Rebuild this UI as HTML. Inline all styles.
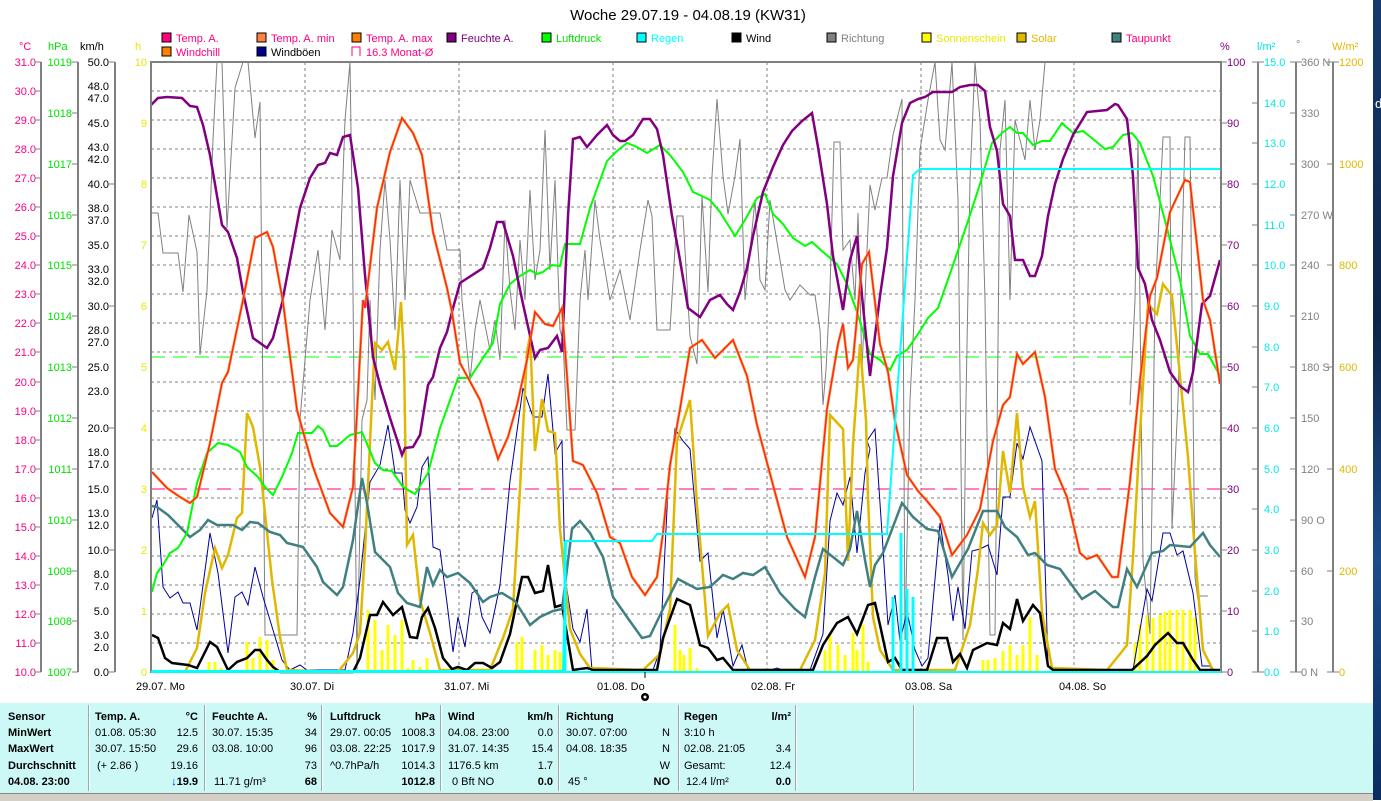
<!DOCTYPE html>
<html><head><meta charset="utf-8">
<style>
html,body{margin:0;padding:0;background:#fff;width:1381px;height:800px;overflow:hidden;font-family:"Liberation Sans",sans-serif;}
svg{position:absolute;left:0;top:0}
#tbl{position:absolute;left:0;top:703px;width:1373px;height:90px;background:#ccf8f6;font-size:11px;}
#tbl div{position:absolute;white-space:nowrap;line-height:13px}
.b{font-weight:bold}
.sep{position:absolute;top:2px;width:1px;height:86px;background:#9aa;border-right:1px solid #fff}
#status{position:absolute;left:0;top:793px;width:1373px;height:7px;background:#d4d0c8;border-top:1px solid #888}
#strip{position:absolute;left:1373px;top:0;width:8px;height:800px;background:linear-gradient(#163a6e,#0c2448 40%,#1c4c8c 70%,#0a2c60)}
</style></head><body>
<svg width="1381" height="800" xmlns="http://www.w3.org/2000/svg" font-family="Liberation Sans, sans-serif" font-size="11">
<text x="688" y="20" font-size="15" text-anchor="middle" fill="#000">Woche 29.07.19 - 04.08.19 (KW31)</text>
<g stroke="#000" stroke-width="1">
<rect x="162" y="33" width="9" height="9" fill="#ff0080"/>
<rect x="257" y="33" width="9" height="9" fill="#ff8040"/>
<rect x="352" y="33" width="9" height="9" fill="#ff8000"/>
<rect x="447" y="33" width="9" height="9" fill="#800080"/>
<rect x="542" y="33" width="9" height="9" fill="#00ff00"/>
<rect x="637" y="33" width="9" height="9" fill="#00ffff"/>
<rect x="732" y="33" width="9" height="9" fill="#000"/>
<rect x="827" y="33" width="9" height="9" fill="#808080"/>
<rect x="922" y="33" width="9" height="9" fill="#ffff00"/>
<rect x="1017" y="33" width="9" height="9" fill="#e0b800"/>
<rect x="1112" y="33" width="9" height="9" fill="#408080"/>
<rect x="162" y="47" width="9" height="9" fill="#ff8000"/>
<rect x="257" y="47" width="9" height="9" fill="#000090"/>
</g>
<path d="M352 56 V47 H360 V56" fill="none" stroke="#ff0080"/>
<g>
<text x="176" y="42" fill="#ff0080">Temp. A.</text>
<text x="271" y="42" fill="#ff0080">Temp. A. min</text>
<text x="366" y="42" fill="#ff0080">Temp. A. max</text>
<text x="461" y="42" fill="#800080">Feuchte A.</text>
<text x="556" y="42" fill="#00e000">Luftdruck</text>
<text x="651" y="42" fill="#00ffff">Regen</text>
<text x="746" y="42" fill="#000">Wind</text>
<text x="841" y="42" fill="#808080">Richtung</text>
<text x="936" y="42" fill="#e8e800">Sonnenschein</text>
<text x="1031" y="42" fill="#e0b800">Solar</text>
<text x="1126" y="42" fill="#ff0080">Taupunkt</text>
<text x="176" y="56" fill="#ff0080">Windchill</text>
<text x="271" y="56" fill="#000">Windböen</text>
<text x="366" y="56" fill="#ff0080">16.3 Monat-Ø</text>
</g>
<text x="19" y="50" fill="#ff0080">°C</text>
<text x="48" y="50" fill="#00e000">hPa</text>
<text x="80" y="50" fill="#000">km/h</text>
<text x="135" y="50" fill="#e8e800">h</text>
<text x="1220" y="50" fill="#800080">%</text>
<text x="1257" y="50" fill="#00e0e0">l/m²</text>
<text x="1296" y="48" fill="#808080">°</text>
<text x="1332" y="50" fill="#e0b800">W/m²</text>
<g stroke="#808080" stroke-width="2">
<line x1="41" y1="62" x2="41" y2="672"/><line x1="78" y1="62" x2="78" y2="672"/><line x1="115" y1="62" x2="115" y2="672"/>
<line x1="1258" y1="62" x2="1258" y2="672"/><line x1="1296" y1="62" x2="1296" y2="672"/><line x1="1333" y1="62" x2="1333" y2="672"/>
</g>
<g stroke="#808080" stroke-width="1" stroke-dasharray="3,3">
<line x1="151" y1="91" x2="1221" y2="91"/><line x1="151" y1="120" x2="1221" y2="120"/><line x1="151" y1="149" x2="1221" y2="149"/><line x1="151" y1="178" x2="1221" y2="178"/><line x1="151" y1="207" x2="1221" y2="207"/><line x1="151" y1="236" x2="1221" y2="236"/><line x1="151" y1="265" x2="1221" y2="265"/><line x1="151" y1="294" x2="1221" y2="294"/><line x1="151" y1="323" x2="1221" y2="323"/><line x1="151" y1="352" x2="1221" y2="352"/><line x1="151" y1="382" x2="1221" y2="382"/><line x1="151" y1="411" x2="1221" y2="411"/><line x1="151" y1="440" x2="1221" y2="440"/><line x1="151" y1="469" x2="1221" y2="469"/><line x1="151" y1="498" x2="1221" y2="498"/><line x1="151" y1="527" x2="1221" y2="527"/><line x1="151" y1="556" x2="1221" y2="556"/><line x1="151" y1="585" x2="1221" y2="585"/><line x1="151" y1="614" x2="1221" y2="614"/><line x1="151" y1="643" x2="1221" y2="643"/>
<line x1="305" y1="62" x2="305" y2="672"/><line x1="459" y1="62" x2="459" y2="672"/><line x1="613" y1="62" x2="613" y2="672"/><line x1="767" y1="62" x2="767" y2="672"/><line x1="921" y1="62" x2="921" y2="672"/><line x1="1074" y1="62" x2="1074" y2="672"/>
</g>
<line x1="151" y1="357" x2="1221" y2="357" stroke="#00ff00" stroke-dasharray="14,8"/>
<line x1="151" y1="489" x2="1221" y2="489" stroke="#ff0080" stroke-dasharray="14,8"/>
<g stroke="#ffff00" stroke-width="3">
<path d="M209 672V662M215 672V662M221 672V668M247 672V642M253 672V658M260 672V637M267 672V640M273 672V660M368 672V610M375 672V620M382 672V650M388 672V625M395 672V635M402 672V620M408 672V668M413 672V660M420 672V667M427 672V658M517 672V642M522 672V637M535 672V650M542 672V645M548 672V655M555 672V650M560 672V652M675 672V625M680 672V650M684 672V655M690 672V648M697 672V668M825 672V650M830 672V633M838 672V645M845 672V655M853 672V633M857 672V650M863 672V625M868 672V662M983 672V660M988 672V660M995 672V658M1003 672V651M1010 672V645M1017 672V655M1023 672V645M1030 672V617M1037 672V655M1135 672V643M1140 672V625M1147 672V615M1153 672V618M1160 672V615M1165 672V612M1170 672V610M1177 672V610M1183 672V610M1190 672V610M1195 672V618"/>
</g>
<polyline fill="none" stroke="#808080" stroke-width="1" points="151,213 158,213 163,253 178,253 183,292 189,215 197,252 200,355 207,290 213,140 217,62 222,62 227,228 232,140 235,88 243,62 248,62 255,138 260,102 262,300 265,635 297,635 300,420 310,300 318,250 325,330 332,230 340,260 345,120 350,62 352,200 357,670 362,420 367,400 370,300 375,400 380,250 385,180 390,240 395,330 400,180 405,300 410,180 420,213 440,213 447,250 460,250 462,300 470,380 475,330 480,300 490,350 495,320 500,360 505,220 510,290 515,330 520,240 525,300 530,190 535,280 540,250 545,130 550,270 555,180 560,330 563,340 567,430 575,430 580,300 585,250 588,300 595,200 600,240 610,300 620,270 630,320 640,250 648,200 652,216 657,330 670,330 677,216 683,216 690,336 697,364 702,196 708,292 712,176 717,99 723,176 728,214 735,176 740,139 745,300 750,250 755,200 760,280 765,290 770,200 775,230 780,260 785,290 790,300 800,285 810,295 815,295 820,330 823,405 826,370 830,290 834,142 840,142 843,250 850,240 855,300 858,213 862,370 867,250 870,185 875,210 882,178 887,178 893,135 902,99 905,640 910,400 915,300 920,150 928,100 935,62 940,140 945,150 952,62 958,200 963,640 966,400 970,180 975,62 980,120 985,300 990,635 995,635 1000,150 1005,100 1010,300 1015,120 1020,140 1025,160 1030,100 1035,150 1040,120 1045,62 1050,62"/>
<polyline fill="none" stroke="#808080" stroke-width="1" points="1130,405 1135,300 1138,139 1143,561 1150,634 1155,300 1160,200 1163,137 1170,137 1172,529 1178,400 1185,137 1190,137 1195,577 1198,600"/>
<line x1="1200" y1="596" x2="1208" y2="596" stroke="#808080"/>
<line x1="267" y1="635" x2="297" y2="635" stroke="#808080" stroke-dasharray="6,3"/>
<polyline fill="none" stroke="#0000a0" stroke-width="1" points="152,518 157,500 163,587 170,598 178,592 183,603 190,603 197,630 210,533 218,573 228,653 235,597 242,592 248,605 255,567 263,597 273,630 282,660 290,670 300,665 307,670 345,670 353,633 360,580 370,482 380,465 388,425 395,473 402,473 405,510 410,523 417,507 422,467 428,457 433,547 440,550 447,603 453,652 458,617 465,647 472,593 477,590 482,617 490,633 500,585 510,481 523,388 533,417 542,417 548,374 555,453 562,441 565,577 573,629 580,642 587,609 592,670 653,670 660,650 668,489 675,429 683,441 690,449 700,561 708,553 717,638 723,609 733,666 742,645 748,670 770,670 777,668 783,670 810,670 823,634 830,521 837,493 843,505 850,477 857,553 865,473 870,449 867,441 875,429 882,533 888,625 895,595 900,642 907,611 915,650 922,666 928,658 940,523 948,575 953,621 958,587 965,629 972,551 980,549 988,545 997,575 1003,497 1010,497 1017,443 1023,459 1030,427 1042,461 1048,666 1060,670 1133,670 1147,589 1152,601 1163,533 1170,533 1177,555 1183,551 1193,593 1202,666 1210,666 1213,672"/>
<polyline fill="none" stroke="#e0b800" stroke-width="2.5" points="185,672 197,648 205,593 215,548 222,568 228,555 237,518 242,513 247,413 253,427 260,467 265,513 272,580 280,637 287,670 338,672 353,653 360,633 365,550 372,400 375,343 382,350 388,342 395,370 401,302 404,360 407,545 413,535 420,600 430,633 440,670 490,670 503,638 513,609 520,489 527,352 530,336 535,451 542,399 548,431 555,433 560,529 570,629 580,654 590,668 643,670 660,654 670,609 677,441 690,400 697,505 708,636 720,613 728,605 737,650 750,670 800,670 815,640 825,573 830,415 843,429 848,561 853,445 860,344 866,420 868,497 873,617 880,650 893,670 955,670 970,625 978,569 983,523 990,535 997,525 1003,451 1010,493 1017,413 1023,487 1030,517 1035,501 1042,613 1052,668 1107,670 1120,654 1127,645 1133,557 1140,433 1148,304 1157,314 1163,284 1172,296 1180,376 1188,457 1195,553 1203,650 1213,670"/>
<polyline fill="none" stroke="#000" stroke-width="2.5" points="152,635 158,638 165,658 172,663 188,665 197,668 210,642 217,647 228,670 237,662 247,658 255,650 260,650 267,660 273,667 280,672 353,672 360,658 370,615 377,615 383,602 393,615 402,607 410,637 417,638 422,617 428,608 435,628 443,658 452,669 458,667 467,670 475,663 483,663 492,668 500,662 510,634 522,577 528,577 535,593 543,591 548,565 555,607 562,605 573,670 587,668 593,670 657,670 663,638 677,599 690,605 700,645 708,648 717,660 723,658 733,670 813,670 823,645 837,623 848,617 857,634 868,605 875,603 880,625 888,662 895,658 902,670 927,670 937,638 947,638 953,662 960,654 967,668 973,650 987,643 997,645 1003,623 1010,629 1017,599 1023,621 1033,605 1040,613 1048,666 1053,670 1132,670 1147,656 1155,645 1168,633 1177,643 1183,643 1193,660 1200,670 1221,670"/>
<polyline fill="none" stroke="#408080" stroke-width="2.5" points="152,506 157,507 168,515 180,527 190,537 200,530 208,520 217,525 233,525 242,530 250,522 258,523 270,532 280,535 287,543 303,547 317,567 323,582 337,595 343,587 353,540 362,478 367,503 375,552 390,567 398,593 407,603 420,607 427,567 433,585 440,570 447,577 458,573 470,583 483,602 490,597 502,593 515,601 530,625 540,617 553,611 562,609 572,529 580,521 590,533 603,557 613,597 627,617 642,638 650,636 663,609 678,579 697,589 710,587 723,575 733,579 743,573 753,575 765,567 780,593 795,609 805,617 815,577 823,549 843,565 850,549 857,511 865,560 870,587 875,565 883,553 902,503 913,517 927,529 938,531 952,577 968,549 983,511 997,511 1005,527 1017,537 1028,555 1035,553 1047,565 1060,569 1082,599 1095,591 1113,607 1118,607 1127,569 1137,587 1152,553 1163,551 1170,545 1190,547 1203,533 1210,545 1220,557"/>
<polyline fill="none" stroke="#00ff00" stroke-width="2" points="152,592 157,573 163,565 170,553 178,548 187,533 197,483 207,453 218,443 228,445 240,452 247,467 258,477 265,487 273,495 282,477 292,453 298,433 312,433 318,426 323,430 330,446 337,446 350,435 362,432 375,463 383,470 392,471 403,487 415,494 428,473 440,428 458,378 470,378 483,358 493,343 500,304 510,284 520,276 530,270 537,274 543,272 552,265 560,266 565,244 580,244 590,208 607,161 617,151 627,143 637,147 647,153 660,145 670,155 683,172 693,192 702,196 710,200 720,212 735,236 745,220 757,198 765,194 773,214 783,224 793,238 805,246 812,242 823,252 837,264 847,284 857,312 870,354 880,360 890,370 897,356 907,350 918,334 928,318 938,308 952,268 967,224 980,184 992,143 1002,133 1010,127 1017,133 1023,133 1033,145 1042,141 1050,141 1062,123 1073,133 1083,131 1093,139 1105,149 1113,147 1123,135 1132,133 1140,143 1153,176 1167,228 1180,280 1190,336 1200,354 1208,354 1220,376"/>
<polyline fill="none" stroke="#800080" stroke-width="2.5" points="151,105 158,98 167,97 182,98 190,106 197,107 203,125 210,155 222,225 228,232 237,258 243,292 248,315 253,338 267,348 273,338 282,303 300,208 310,178 318,165 325,163 330,153 337,155 343,137 350,135 358,188 365,275 373,357 380,385 390,418 402,455 405,448 413,447 420,435 428,385 433,377 440,348 447,332 453,308 460,283 483,268 490,248 497,222 503,222 513,256 523,304 535,358 540,350 548,348 557,336 562,352 568,216 573,139 580,137 587,147 597,135 607,125 613,135 620,141 625,141 633,135 643,119 650,119 657,129 663,155 672,216 680,260 688,308 700,317 710,300 720,295 727,304 733,310 740,292 747,268 753,236 763,192 773,167 783,145 792,131 802,121 812,113 818,147 827,204 833,256 843,310 850,260 857,236 862,296 870,376 880,296 887,248 893,176 902,123 910,103 918,99 925,97 933,92 952,92 960,87 970,85 978,85 985,91 990,127 997,151 1003,204 1010,216 1015,260 1023,260 1030,276 1035,276 1042,256 1048,216 1055,184 1063,159 1073,135 1087,112 1107,110 1115,104 1118,105 1127,119 1133,176 1138,268 1145,284 1152,320 1160,340 1170,372 1180,386 1188,392 1193,372 1202,304 1210,296 1220,260"/>
<polyline fill="none" stroke="#ff8000" stroke-width="2.5" points="152,472 167,488 180,497 190,503 197,497 210,443 222,383 228,372 243,300 255,238 267,232 273,247 283,302 297,410 313,467 330,513 343,527 353,487 363,300 365,308 377,208 390,152 402,118 413,133 422,155 433,232 447,288 452,312 460,363 480,400 490,433 498,459 508,437 517,405 527,360 535,312 545,324 553,326 562,308 567,376 573,461 583,465 597,493 610,537 620,543 632,577 645,595 657,577 663,533 670,465 680,409 690,348 702,340 715,358 733,340 747,376 757,425 773,485 787,537 805,577 815,537 827,409 838,344 843,324 848,368 853,360 862,264 869,252 880,344 888,372 895,421 907,475 918,491 927,501 940,517 952,555 967,535 980,509 993,441 1003,405 1010,397 1017,354 1023,364 1035,352 1045,397 1055,469 1067,497 1080,553 1087,559 1097,555 1112,577 1118,577 1130,481 1140,380 1150,296 1157,278 1170,212 1185,180 1190,182 1203,300 1210,320 1220,384"/>
<polyline fill="none" stroke="#ff1040" stroke-width="1" points="152,472 167,488 180,497 190,503 197,497 210,443 222,383 228,372 243,300 255,238 267,232 273,247 283,302 297,410 313,467 330,513 343,527 353,487 363,300 365,308 377,208 390,152 402,118 413,133 422,155 433,232 447,288 452,312 460,363 480,400 490,433 498,459 508,437 517,405 527,360 535,312 545,324 553,326 562,308 567,376 573,461 583,465 597,493 610,537 620,543 632,577 645,595 657,577 663,533 670,465 680,409 690,348 702,340 715,358 733,340 747,376 757,425 773,485 787,537 805,577 815,537 827,409 838,344 843,324 848,368 853,360 862,264 869,252 880,344 888,372 895,421 907,475 918,491 927,501 940,517 952,555 967,535 980,509 993,441 1003,405 1010,397 1017,354 1023,364 1035,352 1045,397 1055,469 1067,497 1080,553 1087,559 1097,555 1112,577 1118,577 1130,481 1140,380 1150,296 1157,278 1170,212 1185,180 1190,182 1203,300 1210,320 1220,384"/>
<polyline fill="none" stroke="#00ffff" stroke-width="2" points="151,671 563,671 566,541 652,541 657,534 887,534 913,175 920,169 1221,169"/>
<g stroke="#00ffff" stroke-width="3"><path d="M565 672V541M893 672V597M901 672V533M907 672V589M913 672V597"/></g>
<rect x="151" y="62" width="1070" height="610" fill="none" stroke="#808080" stroke-width="2"/>
<line x1="151" y1="672" x2="1221" y2="672" stroke="#00ffff" stroke-width="2"/>
<g fill="#000">
<text x="136" y="690">29.07.  Mo</text><text x="290" y="690">30.07.  Di</text><text x="444" y="690">31.07.  Mi</text><text x="597" y="690">01.08.  Do</text><text x="751" y="690">02.08.  Fr</text><text x="905" y="690">03.08.  Sa</text><text x="1059" y="690">04.08.  So</text>
</g>
<line x1="645" y1="672" x2="645" y2="678" stroke="#000"/>
<circle cx="645" cy="697" r="4" fill="#000"/><circle cx="645" cy="697" r="1.5" fill="#fff"/>
</svg>
<div id="tbl">
<div class="b" style="left:8px;top:8px">Sensor</div>
<div class="b" style="left:8px;top:24px">MinWert</div>
<div class="b" style="left:8px;top:40px">MaxWert</div>
<div class="b" style="left:8px;top:57px">Durchschnitt</div>
<div class="b" style="left:8px;top:73px">04.08. 23:00</div>
<div class="sep" style="left:88px"></div><div class="sep" style="left:204px"></div><div class="sep" style="left:321px"></div><div class="sep" style="left:440px"></div><div class="sep" style="left:558px"></div><div class="sep" style="left:678px"></div><div class="sep" style="left:795px"></div><div class="sep" style="left:913px"></div>
<div class="b" style="left:95px;top:8px">Temp. A.</div><div class="b" style="right:1175px;top:8px">°C</div>
<div style="left:95px;top:24px">01.08.  05:30</div><div style="right:1175px;top:24px">12.5</div>
<div style="left:95px;top:40px">30.07.  15:50</div><div style="right:1175px;top:40px">29.6</div>
<div style="left:97px;top:57px">(+ 2.86 )</div><div style="right:1175px;top:57px">19.16</div>
<div class="b" style="right:1175px;top:73px"><span style="color:#0020ff">↓</span>19.9</div>
<div class="b" style="left:212px;top:8px">Feuchte A.</div><div class="b" style="right:1056px;top:8px">%</div>
<div style="left:212px;top:24px">30.07.  15:35</div><div style="right:1056px;top:24px">34</div>
<div style="left:212px;top:40px">03.08.  10:00</div><div style="right:1056px;top:40px">96</div>
<div style="right:1056px;top:57px">73</div>
<div style="left:214px;top:73px">11.71 g/m³</div><div class="b" style="right:1056px;top:73px">68</div>
<div class="b" style="left:330px;top:8px">Luftdruck</div><div class="b" style="right:938px;top:8px">hPa</div>
<div style="left:330px;top:24px">29.07.  00:05</div><div style="right:938px;top:24px">1008.3</div>
<div style="left:330px;top:40px">03.08.  22:25</div><div style="right:938px;top:40px">1017.9</div>
<div style="left:330px;top:57px">^0.7hPa/h</div><div style="right:938px;top:57px">1014.3</div>
<div class="b" style="right:938px;top:73px">1012.8</div>
<div class="b" style="left:448px;top:8px">Wind</div><div class="b" style="right:820px;top:8px">km/h</div>
<div style="left:448px;top:24px">04.08.  23:00</div><div style="right:820px;top:24px">0.0</div>
<div style="left:448px;top:40px">31.07.  14:35</div><div style="right:820px;top:40px">15.4</div>
<div style="left:448px;top:57px">1176.5 km</div><div style="right:820px;top:57px">1.7</div>
<div style="left:452px;top:73px">0 Bft NO</div><div class="b" style="right:820px;top:73px">0.0</div>
<div class="b" style="left:566px;top:8px">Richtung</div>
<div style="left:566px;top:24px">30.07.  07:00</div><div style="right:703px;top:24px">N</div>
<div style="left:566px;top:40px">04.08.  18:35</div><div style="right:703px;top:40px">N</div>
<div style="right:703px;top:57px">W</div>
<div style="left:568px;top:73px">45 °</div><div class="b" style="right:703px;top:73px">NO</div>
<div class="b" style="left:684px;top:8px">Regen</div><div class="b" style="right:582px;top:8px">l/m²</div>
<div style="left:684px;top:24px">3:10 h</div>
<div style="left:684px;top:40px">02.08.  21:05</div><div style="right:582px;top:40px">3.4</div>
<div style="left:684px;top:57px">Gesamt:</div><div style="right:582px;top:57px">12.4</div>
<div style="left:686px;top:73px">12.4 l/m²</div><div class="b" style="right:582px;top:73px">0.0</div>
</div>
<div id="status"></div>
<div id="strip"></div>
<div style="position:absolute;left:1375px;top:96px;color:#fff;font-size:13px;font-family:'Liberation Sans',sans-serif">d</div>
<svg width="1381" height="800" xmlns="http://www.w3.org/2000/svg" font-family="Liberation Sans, sans-serif" font-size="11" style="pointer-events:none">
<g fill="#ff0080" text-anchor="end">
<text x="36" y="66">31.0</text><text x="36" y="95">30.0</text><text x="36" y="124">29.0</text><text x="36" y="153">28.0</text><text x="36" y="182">27.0</text><text x="36" y="211">26.0</text><text x="36" y="240">25.0</text><text x="36" y="269">24.0</text><text x="36" y="298">23.0</text><text x="36" y="327">22.0</text><text x="36" y="356">21.0</text><text x="36" y="386">20.0</text><text x="36" y="415">19.0</text><text x="36" y="444">18.0</text><text x="36" y="473">17.0</text><text x="36" y="502">16.0</text><text x="36" y="531">15.0</text><text x="36" y="560">14.0</text><text x="36" y="589">13.0</text><text x="36" y="618">12.0</text><text x="36" y="647">11.0</text><text x="36" y="676">10.0</text>
</g>
<g fill="#00e000" text-anchor="end">
<text x="72" y="66">1019</text><text x="72" y="117">1018</text><text x="72" y="168">1017</text><text x="72" y="219">1016</text><text x="72" y="269">1015</text><text x="72" y="320">1014</text><text x="72" y="371">1013</text><text x="72" y="422">1012</text><text x="72" y="473">1011</text><text x="72" y="524">1010</text><text x="72" y="575">1009</text><text x="72" y="625">1008</text><text x="72" y="676">1007</text>
</g>
<g fill="#000" text-anchor="end">
<text x="109" y="66">50.0</text><text x="109" y="90">48.0</text><text x="109" y="102">47.0</text><text x="109" y="127">45.0</text><text x="109" y="151">43.0</text><text x="109" y="163">42.0</text><text x="109" y="188">40.0</text><text x="109" y="212">38.0</text><text x="109" y="224">37.0</text><text x="109" y="249">35.0</text><text x="109" y="273">33.0</text><text x="109" y="285">32.0</text><text x="109" y="310">30.0</text><text x="109" y="334">28.0</text><text x="109" y="346">27.0</text><text x="109" y="371">25.0</text><text x="109" y="395">23.0</text><text x="109" y="432">20.0</text><text x="109" y="456">18.0</text><text x="109" y="468">17.0</text><text x="109" y="493">15.0</text><text x="109" y="517">13.0</text><text x="109" y="529">12.0</text><text x="109" y="554">10.0</text><text x="109" y="578">8.0</text><text x="109" y="590">7.0</text><text x="109" y="615">5.0</text><text x="109" y="639">3.0</text><text x="109" y="651">2.0</text><text x="109" y="676">0.0</text>
</g>
<g fill="#e8e800" text-anchor="end">
<text x="147" y="66">10</text><text x="147" y="127">9</text><text x="147" y="188">8</text><text x="147" y="249">7</text><text x="147" y="310">6</text><text x="147" y="371">5</text><text x="147" y="432">4</text><text x="147" y="493">3</text><text x="147" y="554">2</text><text x="147" y="615">1</text><text x="147" y="676">0</text>
</g>
<g fill="#800080">
<text x="1227" y="66">100</text><text x="1227" y="127">90</text><text x="1227" y="188">80</text><text x="1227" y="249">70</text><text x="1227" y="310">60</text><text x="1227" y="371">50</text><text x="1227" y="432">40</text><text x="1227" y="493">30</text><text x="1227" y="554">20</text><text x="1227" y="615">10</text><text x="1227" y="676">0</text>
</g>
<g fill="#00e8e8">
<text x="1264" y="66">15.0</text><text x="1264" y="107">14.0</text><text x="1264" y="147">13.0</text><text x="1264" y="188">12.0</text><text x="1264" y="229">11.0</text><text x="1264" y="269">10.0</text><text x="1264" y="310">9.0</text><text x="1264" y="351">8.0</text><text x="1264" y="391">7.0</text><text x="1264" y="432">6.0</text><text x="1264" y="473">5.0</text><text x="1264" y="513">4.0</text><text x="1264" y="554">3.0</text><text x="1264" y="595">2.0</text><text x="1264" y="635">1.0</text><text x="1264" y="676">0.0</text>
</g>
<g fill="#808080">
<text x="1301" y="66">360 N</text><text x="1301" y="117">330</text><text x="1301" y="168">300</text><text x="1301" y="219">270 W</text><text x="1301" y="269">240</text><text x="1301" y="320">210</text><text x="1301" y="371">180 S</text><text x="1301" y="422">150</text><text x="1301" y="473">120</text><text x="1301" y="524">90  O</text><text x="1301" y="575">60</text><text x="1301" y="625">30</text><text x="1301" y="676">0  N</text>
</g>
<g fill="#e0b800">
<text x="1339" y="66">1200</text><text x="1339" y="168">1000</text><text x="1339" y="269">800</text><text x="1339" y="371">600</text><text x="1339" y="473">400</text><text x="1339" y="575">200</text><text x="1339" y="676">0</text>
</g>
<g stroke="#808080" stroke-width="1">
<path d="M35 62h6M35 91h6M35 120h6M35 149h6M35 178h6M35 207h6M35 236h6M35 265h6M35 294h6M35 323h6M35 352h6M35 382h6M35 411h6M35 440h6M35 469h6M35 498h6M35 527h6M35 556h6M35 585h6M35 614h6M35 643h6M35 672h6"/>
<path d="M72 62h6M72 113h6M72 164h6M72 215h6M72 265h6M72 316h6M72 367h6M72 418h6M72 469h6M72 520h6M72 571h6M72 621h6M72 672h6"/>
<path d="M109 62h6M109 672h6M109 306h6M109 428h6M109 550h6M109 184h6"/>
<path d="M1221 62h6M1221 123h6M1221 184h6M1221 245h6M1221 306h6M1221 367h6M1221 428h6M1221 489h6M1221 550h6M1221 611h6M1221 672h6"/>
<path d="M1252 62h12M1252 103h6M1252 143h6M1252 184h6M1252 225h6M1252 265h6M1252 306h6M1252 347h6M1252 387h6M1252 428h6M1252 469h6M1252 509h6M1252 550h6M1252 591h6M1252 631h6M1252 672h12"/>
<path d="M1290 62h12M1290 113h6M1290 164h6M1290 215h6M1290 265h6M1290 316h6M1290 367h6M1290 418h6M1290 469h6M1290 520h6M1290 571h6M1290 621h6M1290 672h12"/>
<path d="M1327 62h12M1327 164h6M1327 265h6M1327 367h6M1327 469h6M1327 571h6M1327 672h12"/>
</g>
</svg>
</body></html>
